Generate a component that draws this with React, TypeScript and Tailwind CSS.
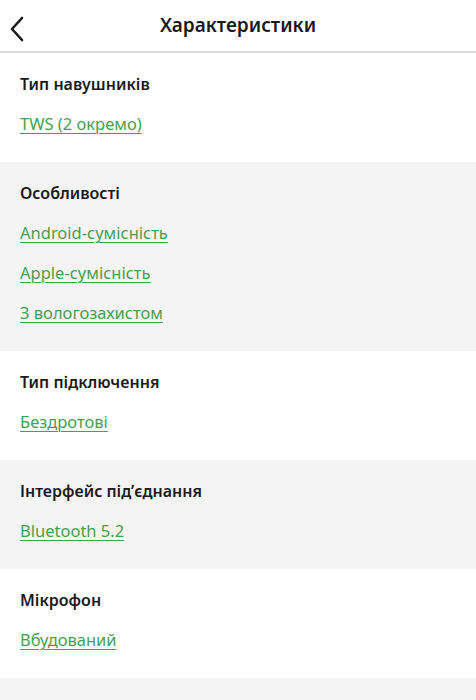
import React from 'react';

type Spec = { title: string; values: string[] };

const specs: Spec[] = [
  { title: 'Тип навушників', values: ['TWS (2 окремо)'] },
  { title: 'Особливості', values: ['Android-сумісність', 'Apple-сумісність', 'З вологозахистом'] },
  { title: 'Тип підключення', values: ['Бездротові'] },
  { title: 'Інтерфейс під\u2019єднання', values: ['Bluetooth 5.2'] },
  { title: 'Мікрофон', values: ['Вбудований'] },
];

export default function App() {
  return (
    <div className="w-[476px] h-[700px] overflow-hidden bg-[#f4f4f4] text-[#1a1a1a]" style={{ fontFamily: '"Noto Sans", sans-serif' }}>
      <div className="relative flex h-[53px] items-center justify-center border-b-2 border-[#dcdcdc] bg-white">
        <button className="absolute left-[5px] top-[12px] p-1">
          <svg width="16" height="26" viewBox="0 0 16 26" fill="none">
            <path d="M13 2L3 13l10 11" stroke="#1a1a1a" strokeWidth="2.6" strokeLinecap="round" strokeLinejoin="round" />
          </svg>
        </button>
        <h1 className="text-[19px] font-semibold">Характеристики</h1>
      </div>
      {specs.map((s, i) => (
        <section key={s.title} className={`px-5 pt-[19px] pb-[26px] ${i % 2 ? 'bg-[#f4f4f4]' : 'bg-white'}`}>
          <h2 className="text-[16px] leading-6 font-semibold">{s.title}</h2>
          <div className="mt-4 flex flex-col gap-4">
            {s.values.map((v) => (
              <a key={v} href="#" className="self-start text-[16.5px] leading-6 text-[#46a052] underline decoration-1 underline-offset-[3px]">
                {v}
              </a>
            ))}
          </div>
        </section>
      ))}
    </div>
  );
}
